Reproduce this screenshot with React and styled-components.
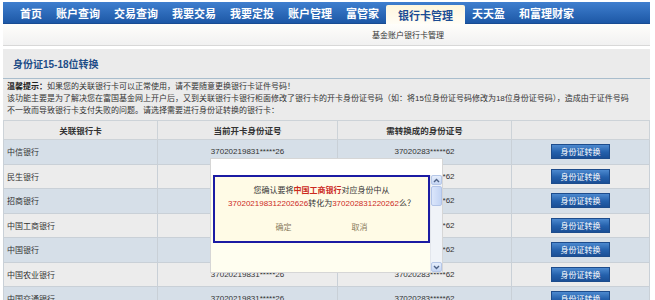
import React from 'react';
import styled, { createGlobalStyle } from 'styled-components';

const GlobalStyle = createGlobalStyle`
  html, body {
    margin: 0;
    padding: 0;
    background: #fff;
    overflow: hidden;
  }
  body {
    font-family: 'Liberation Sans', 'Noto Sans CJK SC', sans-serif;
    font-size: 8px;
    color: #333;
  }
`;

const Page = styled.div`
  position: relative;
  width: 647px;
  margin: 2px 0 0 3px;
`;

const NavBar = styled.div`
  display: flex;
  align-items: flex-end;
  height: 22px;
  padding-left: 10px;
  background: linear-gradient(to bottom, #3f7fcf, #1d58a6);
  border-bottom: 1px solid #194c92;
  box-sizing: border-box;
`;

const NavItem = styled.div`
  display: flex;
  align-items: center;
  height: ${(props) => (props.active ? '19px' : '21px')};
  padding: 0 ${(props) => (props.active ? '12px' : '7px')};
  font-family: 'Noto Sans CJK SC', sans-serif;
  font-size: 11px;
  font-weight: bold;
  color: ${(props) => (props.active ? '#1b4c94' : '#fff')};
  background: ${(props) =>
    props.active ? 'linear-gradient(to bottom, #fff6dc, #fffdf6)' : 'none'};
  border-radius: ${(props) => (props.active ? '2px 2px 0 0' : '0')};
  margin-bottom: ${(props) => (props.active ? '-1px' : '0')};
`;

const SubBar = styled.div`
  display: flex;
  align-items: center;
  height: 21px;
  padding-left: 369px;
  background: linear-gradient(to bottom, #fffefb, #f1f1f1);
  border-bottom: 1px solid #d8d8d8;
  font-family: 'Noto Sans CJK SC', sans-serif;
  font-size: 8px;
  color: #333;
`;

const Panel = styled.div`
  margin-top: 3px;
  background: #ebebeb;
  padding-bottom: 20px;
`;

const PanelTitle = styled.div`
  height: 29px;
  display: flex;
  align-items: center;
  padding-left: 10px;
  border-bottom: 1px solid #a9bdcc;
  font-family: 'Liberation Sans', 'Noto Sans CJK SC', sans-serif;
  font-size: 10px;
  font-weight: bold;
  color: #1e4d87;
`;

const Notice = styled.div`
  padding: 2px 4px 3px 4px;
  line-height: 12px;
`;

const Line = styled.div`
  white-space: nowrap;
`;

const Strong = styled.b`
  color: #222;
`;

const Table = styled.table`
  width: 647px;
  border-collapse: collapse;
  table-layout: fixed;
`;

const HeadCell = styled.th`
  height: 18px;
  padding: 0;
  background: #eaeaea;
  border: 1px solid #cdd3d8;
  font-size: 8.5px;
  font-weight: bold;
  color: #333;
  text-align: center;
`;

const Row = styled.tr`
  background: ${(props) => (props.shade ? '#d6dfe8' : '#ececec')};
`;

const Cell = styled.td`
  height: 23.5px;
  padding: 0 ${(props) => (props.left ? '3px' : '0')};
  border: 1px solid #c9d0d7;
  text-align: ${(props) => (props.left ? 'left' : 'center')};
  white-space: nowrap;
  color: #333;
`;

const ConvertButton = styled.button`
  width: 59px;
  height: 15px;
  padding: 0;
  border: 1px solid #1d4c8c;
  background: linear-gradient(to bottom, #4c89cf, #2460ab 55%, #1b4f96);
  color: #fff;
  font-family: 'Noto Sans CJK SC', sans-serif;
  font-size: 8px;
  cursor: pointer;
`;

const Modal = styled.div`
  position: absolute;
  left: 207px;
  top: 156px;
  width: 233px;
  height: 115px;
  display: flex;
  flex-direction: column;
  background: #fff;
  border: 1px solid #d6d6d6;
  box-sizing: border-box;
`;

const ModalTop = styled.div`
  height: 16px;
`;

const ModalBody = styled.div`
  flex: 1;
  display: flex;
  background: #fffef0;
`;

const ModalContent = styled.div`
  flex: 1;
  padding-left: 2px;
`;

const DialogBox = styled.div`
  height: 68px;
  border: 2px solid #1b1ba3;
  background: #fffbe6;
  box-sizing: border-box;
  display: flex;
  flex-direction: column;
  align-items: center;
  padding-top: 7px;
  font-family: 'Liberation Sans', 'Noto Sans CJK SC', sans-serif;
  font-size: 8px;
  line-height: 13px;
  color: #333;
`;

const Red = styled.span`
  color: #cc2a1e;
  font-weight: ${(props) => (props.bold ? 'bold' : 'normal')};
`;

const DialogActions = styled.div`
  display: flex;
  gap: 60px;
  margin-top: 11px;
`;

const DialogLink = styled.span`
  color: #8a7c5e;
  font-size: 8px;
`;

const ScrollBar = styled.div`
  width: 11px;
  display: flex;
  flex-direction: column;
  background: #f0f3f8;
  border-left: 1px solid #e3e6ec;
`;

const ScrollArrow = styled.div`
  height: 10px;
  display: flex;
  align-items: center;
  justify-content: center;
  background: linear-gradient(to bottom, #e6eefc, #c5d5f3);
  border: 1px solid #b6c7e8;
  border-radius: 2px;
  box-sizing: border-box;
`;

const ScrollThumb = styled.div`
  height: 20px;
  margin-top: 1px;
  background: linear-gradient(to right, #dbe6fb, #c3d4f4);
  border: 1px solid #b2c4e8;
  border-radius: 2px;
  box-sizing: border-box;
`;

const ScrollTrack = styled.div`
  flex: 1;
`;

const Arrow = ({ down }) => (
  <svg width="7" height="5" viewBox="0 0 7 5">
    <path
      d={down ? 'M1 1 L3.5 3.5 L6 1' : 'M1 4 L3.5 1.5 L6 4'}
      fill="none"
      stroke="#4d6185"
      strokeWidth="1.4"
    />
  </svg>
);

const navList = [
  '首页',
  '账户查询',
  '交易查询',
  '我要交易',
  '我要定投',
  '账户管理',
  '富管家',
  '银行卡管理',
  '天天盈',
  '和富理财家',
];

const bankList = [
  '中信银行',
  '民生银行',
  '招商银行',
  '中国工商银行',
  '中国银行',
  '中国农业银行',
  '中国交通银行',
];

export default function App() {
  return (
    <>
      <GlobalStyle />
      <Page>
        <NavBar>
          {navList.map((v) => (
            <NavItem key={v} active={v === '银行卡管理'}>
              {v}
            </NavItem>
          ))}
        </NavBar>
        <SubBar>基金账户银行卡管理</SubBar>
        <Panel>
          <PanelTitle>身份证15-18位转换</PanelTitle>
          <Notice>
            <Line>
              <Strong>温馨提示：</Strong>
              如果您的关联银行卡可以正常使用，请不要随意更换银行卡证件号码！
            </Line>
            <Line>
              该功能主要是为了解决您在富国基金网上开户后，又到关联银行卡银行柜面修改了银行卡的开卡身份证号码（如：将15位身份证号码修改为18位身份证号码），造成由于证件号码
            </Line>
            <Line>
              不一致而导致银行卡支付失败的问题。请选择需要进行身份证转换的银行卡：
            </Line>
          </Notice>
          <Table>
            <colgroup>
              <col style={{ width: 154 }} />
              <col style={{ width: 180 }} />
              <col style={{ width: 174 }} />
              <col />
            </colgroup>
            <thead>
              <tr>
                <HeadCell>关联银行卡</HeadCell>
                <HeadCell>当前开卡身份证号</HeadCell>
                <HeadCell>需转换成的身份证号</HeadCell>
                <HeadCell />
              </tr>
            </thead>
            <tbody>
              {bankList.map((bank, i) => (
                <Row key={bank} shade={i % 2 === 0}>
                  <Cell left>{bank}</Cell>
                  <Cell>37020219831*****26</Cell>
                  <Cell>37020283*****62</Cell>
                  <Cell>
                    <ConvertButton>身份证转换</ConvertButton>
                  </Cell>
                </Row>
              ))}
            </tbody>
          </Table>
        </Panel>
        <Modal>
          <ModalTop />
          <ModalBody>
            <ModalContent>
              <DialogBox>
                <div>
                  您确认要将<Red bold>中国工商银行</Red>对应身份中从
                </div>
                <div>
                  <Red>370202198312202626</Red>转化为
                  <Red>370202831220262</Red>么？
                </div>
                <DialogActions>
                  <DialogLink>确定</DialogLink>
                  <DialogLink>取消</DialogLink>
                </DialogActions>
              </DialogBox>
            </ModalContent>
            <ScrollBar>
              <ScrollArrow>
                <Arrow />
              </ScrollArrow>
              <ScrollThumb />
              <ScrollTrack />
              <ScrollArrow>
                <Arrow down />
              </ScrollArrow>
            </ScrollBar>
          </ModalBody>
        </Modal>
      </Page>
    </>
  );
}
